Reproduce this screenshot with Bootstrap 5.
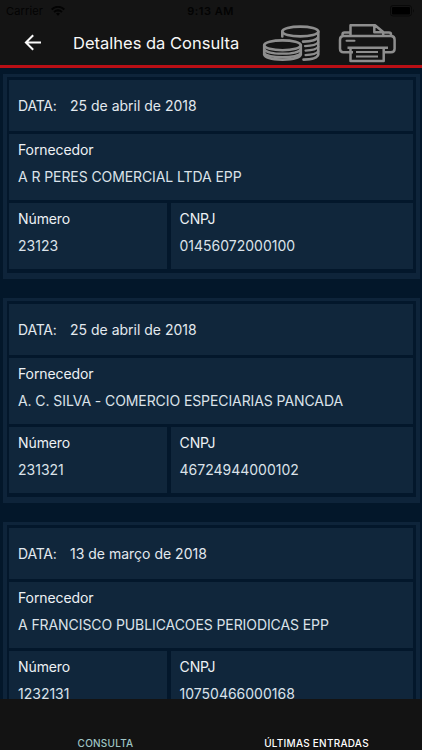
<!DOCTYPE html>
<html lang="pt-BR">
<head>
<meta charset="utf-8">
<meta name="viewport" content="width=device-width, initial-scale=1">
<title>Detalhes da Consulta</title>
<link href="https://cdn.jsdelivr.net/npm/bootstrap@5.3.0/dist/css/bootstrap.min.css" rel="stylesheet">
<style>
body{background:#03172a;color:#e3e9ee;font-family:Inter,"Liberation Sans",sans-serif;font-size:14px;line-height:20px}
.topbar{height:68px;background:#141414;border-bottom:3px solid #b90f15}
.status{height:22px;padding:0 7px 0 6px;color:#030303;font-size:11px;letter-spacing:.15px;display:grid;grid-template-columns:1fr auto 1fr}
.status .clock{letter-spacing:.5px}
.toolbar{height:42px;padding-left:22px}
.page-title{font-size:16.5px;line-height:24px;color:#f8f8f8;margin:0 0 1px 29px;width:189px;font-weight:400;white-space:nowrap}
.records{padding:6px 2px 0 3px}
.record{height:205px;margin-bottom:19px;border:solid #0e243a;border-width:3px 4px 6px;padding:3px 3px 3px 2px;background:#03172b}
.cell{background:#10263b;padding:6px 9px 0;white-space:nowrap}
.date-cell{height:51px;padding-top:1px}
.date-cell .term{width:52px;letter-spacing:-.2px}
.supplier{height:66px;margin:3px 0}
.supplier dd{letter-spacing:-.085px}
.pair{height:66px;gap:4px}
.number-cell{width:158px}
.cnpj-cell{padding-left:8.5px}
.cell dt{font-weight:400;color:#edf1f4;letter-spacing:-.1px}
.cell dd{margin:7px 0 0;color:#dbe2e9}
.tabs{height:51px;background:#131313;font-size:10px;letter-spacing:.25px;line-height:14px;font-weight:500;padding-top:37px}
</style>
<script src="https://cdn.jsdelivr.net/npm/bootstrap@5.3.0/dist/js/bootstrap.bundle.min.js"></script>
</head>
<body class="vh-100 overflow-hidden d-flex flex-column">
<header class="topbar flex-shrink-0">
 <div class="status align-items-center">
  <div class="d-flex align-items-center"><span>Carrier</span>
   <svg class="ms-2" width="14" height="10" viewBox="0 0 14 10" fill="none" stroke="#030303" stroke-width="2"><path d="M.7 3.4Q7-1.8 13.3 3.4M3 6q4-3.2 8 0"/><path d="M5 7.6Q7 6 9 7.6L7 9.8z" fill="#030303" stroke="none"/></svg>
  </div>
  <span class="clock fw-semibold">9:13 AM</span>
  <svg class="ms-auto" width="25" height="12" viewBox="0 0 25 12"><rect x=".5" y=".5" width="21" height="10.5" rx="2.5" fill="none" stroke="#090909"/><rect x="2" y="2" width="18" height="7.5" rx="1" fill="#000"/><path d="M23 4q2 1.8 0 3.6z" fill="#090909"/></svg>
 </div>
 <div class="toolbar d-flex align-items-center">
  <svg width="22" height="22" viewBox="0 0 22 22" fill="none" stroke="#fafafa" stroke-width="2"><path d="M19 10.5H4.2M11.2 3.2L3.9 10.5l7.3 7.3"/></svg>
  <h1 class="page-title">Detalhes da Consulta</h1>
  <svg width="58" height="40" viewBox="262 23 58 40" fill="none" stroke="#8e8e8e" stroke-width="2.6" stroke-linecap="round">
   <ellipse cx="300.3" cy="31.5" rx="18" ry="4.9"/><path d="M282.3 31.5V36.5M318.3 31.5V54.5Q317 59.5 303.5 59.6M318.3 37.2Q316 41.5 303 41.6" /><path stroke-width="2.2" d="M318.3 42.2Q316 45.9 305 46.1M318.3 46.7Q316 50.4 305.5 50.6M318.3 51.2Q316 54.9 305.5 55.1"/>
   <ellipse cx="282.5" cy="45.3" rx="18.3" ry="4.9"/><path d="M264.2 45.3V54.7C266 61.2 299 61.2 300.8 54.7V45.3"/><path stroke-width="2.2" d="M264.2 49.3C266 55.7 299 55.7 300.8 49.3M264.2 53C266 59 299 59 300.8 53" transform="translate(0 -.4)"/>
  </svg>
  <svg class="ms-3" width="62" height="40" viewBox="336 23 62 40" fill="none" stroke="#8e8e8e" stroke-width="2.5" stroke-linejoin="round">
   <path d="M350.5 35.5V25.2H375L383.2 32V35.5M374.3 25.2V32.3H383.2M342.5 36V34.5Q342.5 32.5 344.5 32.5H350M383.5 32.5H389Q391 32.5 391 34.5V36M353 52.3H343.5Q340 52.3 340 48.8V39.8Q340 36 343.5 36H391Q394.6 36 394.6 39.8V48.8Q394.6 52.3 391 52.3H383"/>
   <path d="M346.5 40.8h8" stroke-width="2" stroke-linecap="round"/><path d="M347.5 47.8H388M350.5 47.8V61H383.7V47.8"/><path d="M356 51.9h22M356 56.4h22" stroke-width="2"/>
  </svg>
 </div>
</header>
<main class="records flex-grow-1 overflow-hidden">
 <article class="record">
  <div class="cell date-cell d-flex align-items-center"><span class="term">DATA:</span><time>25 de abril de 2018</time></div>
  <dl class="cell supplier"><dt>Fornecedor</dt><dd>A R PERES COMERCIAL LTDA EPP</dd></dl>
  <div class="pair d-flex"><dl class="cell number-cell mb-0"><dt>Número</dt><dd>23123</dd></dl><dl class="cell cnpj-cell flex-grow-1 mb-0"><dt>CNPJ</dt><dd>01456072000100</dd></dl></div>
 </article>
 <article class="record">
  <div class="cell date-cell d-flex align-items-center"><span class="term">DATA:</span><time>25 de abril de 2018</time></div>
  <dl class="cell supplier"><dt>Fornecedor</dt><dd>A. C. SILVA - COMERCIO ESPECIARIAS PANCADA</dd></dl>
  <div class="pair d-flex"><dl class="cell number-cell mb-0"><dt>Número</dt><dd>231321</dd></dl><dl class="cell cnpj-cell flex-grow-1 mb-0"><dt>CNPJ</dt><dd>46724944000102</dd></dl></div>
 </article>
 <article class="record">
  <div class="cell date-cell d-flex align-items-center"><span class="term">DATA:</span><time>13 de março de 2018</time></div>
  <dl class="cell supplier"><dt>Fornecedor</dt><dd>A FRANCISCO PUBLICACOES PERIODICAS EPP</dd></dl>
  <div class="pair d-flex"><dl class="cell number-cell mb-0"><dt>Número</dt><dd>1232131</dd></dl><dl class="cell cnpj-cell flex-grow-1 mb-0"><dt>CNPJ</dt><dd>10750466000168</dd></dl></div>
 </article>
</main>
<nav class="tabs d-flex text-center flex-shrink-0"><span class="w-50" style="color:#9fc4c4">CONSULTA</span><span class="w-50 text-white">ÚLTIMAS ENTRADAS</span></nav>
</body>
</html>
